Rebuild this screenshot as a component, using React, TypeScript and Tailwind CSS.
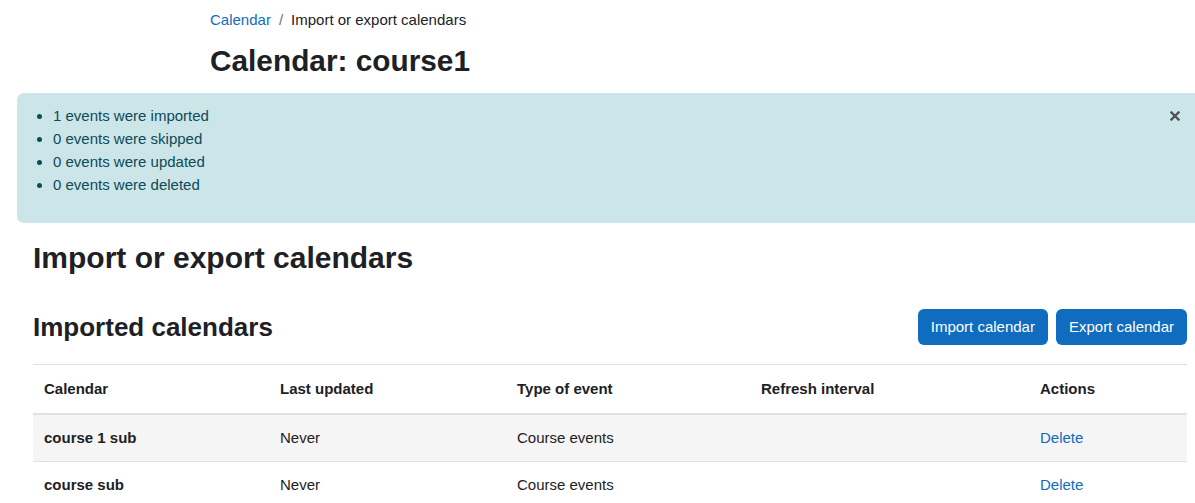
const rows = [
  { name: "course 1 sub", updated: "Never", type: "Course events", refresh: "" },
  { name: "course sub", updated: "Never", type: "Course events", refresh: "" },
];

const cols = ["w-[236px]", "w-[237px]", "w-[244px]", "w-[279px]", "w-[158px]"];

export default function App() {
  return (
    <div
      className="min-h-screen overflow-x-hidden bg-white text-[15px] leading-[22.5px] text-[#1d2125]"
      style={{ fontFamily: '"Liberation Sans", Arial, sans-serif' }}
    >
      {/* page header */}
      <div className="pl-[210px] pt-[9px]">
        <nav className="flex items-center gap-2 leading-[22px]">
          <a className="text-[#0f6cbf]">Calendar</a>
          <span className="text-[#6a737b]">/</span>
          <span>Import or export calendars</span>
        </nav>
        <h1 className="mt-[12px] text-[29.8px] font-bold leading-[36px]">Calendar: course1</h1>
      </div>

      {/* notification */}
      <div className="ml-[17px] mr-[-5px] mt-[14px] flex rounded-l-[7px] bg-[#cce5e9] pl-5 pr-5 pt-[11px] pb-3 leading-[23px] text-[#0d4b57]">
        <ul className="mb-[15px] flex-1 list-disc pl-4">
          <li>1 events were imported</li>
          <li>0 events were skipped</li>
          <li>0 events were updated</li>
          <li>0 events were deleted</li>
        </ul>
        <button className="mt-[6px] flex h-[11px] w-[11px] items-center justify-center text-[#4e5458]">
          <svg viewBox="0 0 10 10" className="h-[10px] w-[10px]">
            <path d="M1.5 1.5L8.5 8.5M8.5 1.5L1.5 8.5" stroke="currentColor" strokeWidth="2.4" strokeLinecap="square" />
          </svg>
        </button>
      </div>

      {/* main region */}
      <div className="pl-[33px] pr-[8px]">
        <h2 className="mt-[17px] text-[30px] font-bold leading-[36px]">Import or export calendars</h2>

        <div className="mt-[33px] flex items-center justify-between">
          <h3 className="text-[26px] font-bold leading-[32px]">Imported calendars</h3>
          <div className="flex gap-2">
            <button className="h-[36px] rounded-[6px] bg-[#0f6cbf] px-[13px] text-white">Import calendar</button>
            <button className="h-[36px] rounded-[6px] bg-[#0f6cbf] px-[13px] text-white">Export calendar</button>
          </div>
        </div>

        <table className="mt-[19px] w-full border-collapse text-left">
          <thead>
            <tr className="border-t border-b-2 border-[#dee2e6]">
              {["Calendar", "Last updated", "Type of event", "Refresh interval", "Actions"].map((h, i) => (
                <th key={h} className={`${cols[i]} px-[11px] py-3 font-bold leading-[23.5px]`}>
                  {h}
                </th>
              ))}
            </tr>
          </thead>
          <tbody>
            {rows.map((r, i) => (
              <tr key={r.name} className={`border-b border-[#dee2e6] ${i % 2 === 0 ? "bg-[#f5f5f5]" : ""}`}>
                <td className="px-[11px] py-3 font-bold">{r.name}</td>
                <td className="px-[11px] py-3">{r.updated}</td>
                <td className="px-[11px] py-3">{r.type}</td>
                <td className="px-[11px] py-3">{r.refresh}</td>
                <td className="px-[11px] py-3">
                  <a className="text-[#0f6cbf]">Delete</a>
                </td>
              </tr>
            ))}
          </tbody>
        </table>
      </div>
    </div>
  );
}
